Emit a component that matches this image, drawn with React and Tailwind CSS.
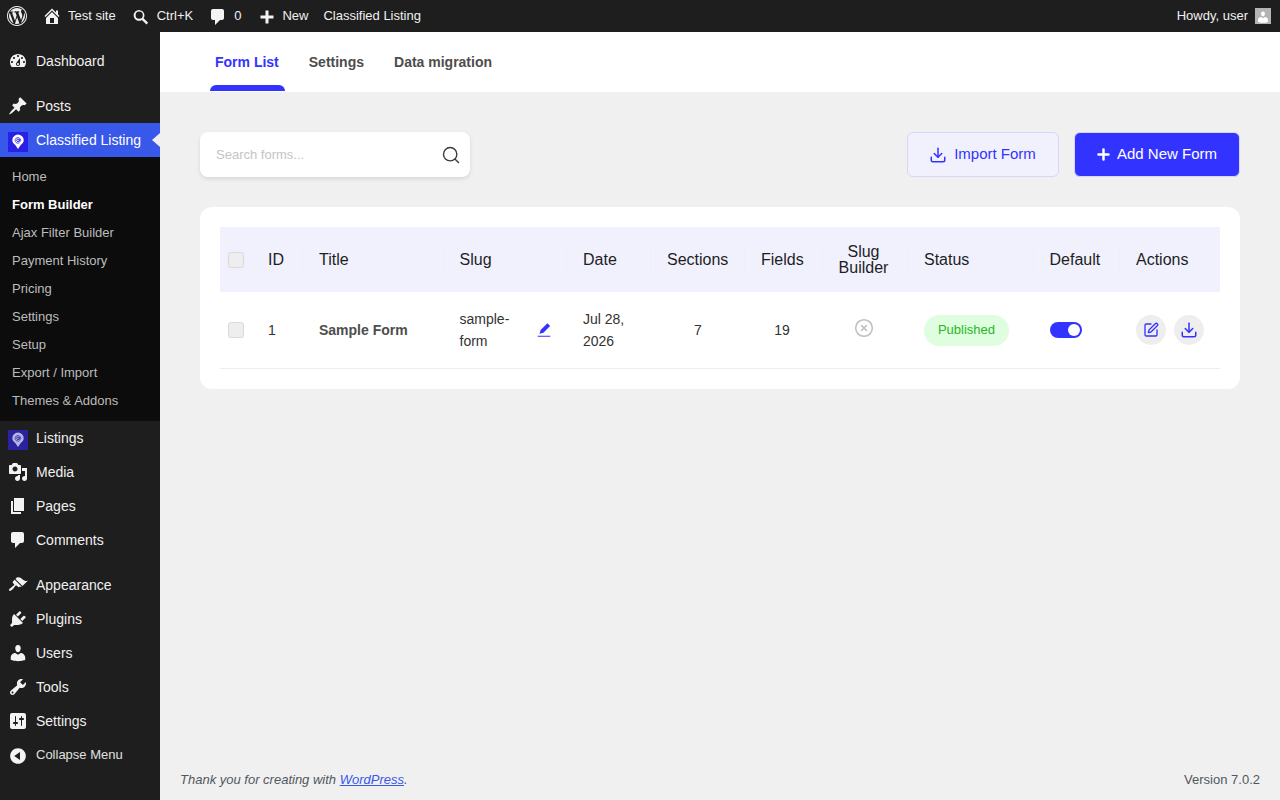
import React from "react";
import { Search, Download, Plus, SquarePen, CircleX } from "lucide-react";

// dashicons, 20x20 grid
const ICONS = {
  wordpress: "M20 10c0-5.52-4.48-10-10-10S0 4.48 0 10s4.48 10 10 10 10-4.48 10-10zM10 1.01c4.96 0 8.99 4.03 8.99 8.99s-4.03 8.99-8.99 8.99S1.01 14.96 1.01 10 5.04 1.01 10 1.01zM8.01 14.82L4.96 6.61c.49-.03 1.05-.08 1.05-.08.43-.05.38-1.01-.06-.99 0 0-1.29.1-2.13.1-.15 0-.33 0-.52-.01 1.44-2.17 3.9-3.6 6.7-3.6 2.09 0 3.99.79 5.41 2.09-.6-.08-1.45.35-1.45 1.42 0 .66.38 1.22.79 1.88.31.54.5 1.22.5 2.21 0 1.34-1.27 4.48-1.27 4.48l-2.71-7.5c.48-.03.75-.16.75-.16.43-.05.38-1.1-.05-1.08 0 0-1.3.11-2.14.11-.78 0-2.11-.11-2.11-.11-.43-.02-.48 1.06-.05 1.08l.84.08 1.12 3.04zm6.02 2.15L16.64 10s.67-1.69.39-3.81c.63 1.14.94 2.42.94 3.81 0 2.96-1.56 5.58-3.94 6.97zM2.68 6.77L6.5 17.25c-2.67-1.3-4.47-4.08-4.47-7.25 0-1.16.2-2.23.65-3.23zm7.45 4.53l2.29 6.25c-.75.27-1.57.42-2.42.42-.72 0-1.41-.11-2.06-.3z",
  home: "M16 8.5l1.53 1.53-1.06 1.06L10 4.62l-6.47 6.47-1.06-1.06L10 2.5l4 4v-2h2v4zm-6-2.46l6 5.99V18H4v-5.97zM12 17v-5H8v5h4z",
  search: "M12.9 11.5l5 5-1.8 1.8-5-5a6 6 0 1 1 1.8-1.8zM8 12a4 4 0 1 0 0-8 4 4 0 0 0 0 8z",
  comment: "M5 2h9c1.1 0 2 .9 2 2v7c0 1.1-.9 2-2 2h-2l-5 5v-5H5c-1.1 0-2-.9-2-2V4c0-1.1.9-2 2-2z",
  plus: "M8.5 3.5h3v5h5v3h-5v5h-3v-5h-5v-3h5z",
  dashboard: "M3.76 16h12.48c1.1-1.37 1.76-3.11 1.76-5 0-4.42-3.58-8-8-8s-8 3.58-8 8c0 1.89.66 3.63 1.76 5zM10 4c.55 0 1 .45 1 1s-.45 1-1 1-1-.45-1-1 .45-1 1-1zM6 6c.55 0 1 .45 1 1s-.45 1-1 1-1-.45-1-1 .45-1 1-1zm8 0c.55 0 1 .45 1 1s-.45 1-1 1-1-.45-1-1 .45-1 1-1zm-5.37 5.55L12 7v6c0 1.1-.9 2-2 2s-2-.9-2-2c0-.57.24-1.08.63-1.45zM4 10c.55 0 1 .45 1 1s-.45 1-1 1-1-.45-1-1 .45-1 1-1zm12 0c.55 0 1 .45 1 1s-.45 1-1 1-1-.45-1-1 .45-1 1-1zm-5 3c0-.55-.45-1-1-1s-1 .45-1 1 .45 1 1 1 1-.45 1-1z",
  posts: "M10.44 3.02l1.82-1.82 6.36 6.35-1.83 1.82c-1.05-.68-2.48-.57-3.41.36l-.75.75c-.92.93-1.04 2.35-.35 3.41l-1.83 1.82-2.41-2.41-2.8 2.79c-.42.42-3.38 2.71-3.8 2.29s1.86-3.39 2.28-3.81l2.79-2.79L4.1 9.36l1.83-1.82c1.05.69 2.48.57 3.4-.36l.75-.75c.93-.92 1.05-2.35.36-3.41z",
  media: "M13 11V4c0-.55-.45-1-1-1h-1.67L9 1H5L3.67 3H2c-.55 0-1 .45-1 1v7c0 .55.45 1 1 1h10c.55 0 1-.45 1-1zM7 4.5c1.38 0 2.5 1.12 2.5 2.5S8.38 9.5 7 9.5 4.5 8.38 4.5 7 5.62 4.5 7 4.5zM14 6h5v10.5c0 1.38-1.12 2.5-2.5 2.5S14 17.88 14 16.5s1.12-2.5 2.5-2.5c.17 0 .34.02.5.05V9h-3V6zm-4 8.05V13h2v3.5c0 1.38-1.12 2.5-2.5 2.5S7 17.88 7 16.5 8.12 14 9.5 14c.17 0 .34.02.5.05z",
  pages: "M6 15V2h10v13H6zm-1 1h8v2H3V5h2v11z",
  appearance: "M14.48 11.06L7.41 3.99l1.5-1.5c.5-.56 2.3-.47 3.51.32 1.21.8 1.43 1.28 2.91 2.1 1.18.64 2.45 1.26 4.45.85zm-.71.71L6.7 4.7 4.93 6.47c-.39.39-.39 1.02 0 1.41l1.06 1.06c.39.39.39 1.03 0 1.42-.6.6-1.43 1.11-2.21 1.69-.35.26-.7.53-1.01.84C1.43 13.23.4 14.79 1.2 15.6c.8.8 2.36-.22 3.71-1.57.31-.31.58-.66.85-1.02.57-.78 1.08-1.61 1.69-2.21.39-.39 1.02-.39 1.41 0l1.06 1.06c.39.39 1.02.39 1.41 0z",
  plugins: "M13.11 4.36L9.87 7.6 8 5.73l3.24-3.24c.35-.34 1.05-.2 1.56.32.52.51.66 1.21.31 1.55zm-8 1.77l.91-1.12 9.01 9.01-1.19.84c-.71.71-2.63 1.16-3.82 1.16H6.14L4.9 17.26c-.59.59-1.54.59-2.12 0-.59-.58-.59-1.53 0-2.12l1.24-1.24v-3.88c0-1.13.4-3.19 1.09-3.89zm7.26 3.97l3.24-3.24c.34-.35 1.04-.21 1.55.31.52.51.66 1.21.31 1.55l-3.24 3.25z",
  users: "M10 9.25c-2.27 0-2.73-3.44-2.73-3.44C7 4.02 7.82 2 9.97 2c2.16 0 2.98 2.02 2.71 3.81 0 0-.41 3.44-2.68 3.44zm0 2.57L12.72 10c2.39 0 4.52 2.33 4.52 4.53v2.49s-3.65 1.13-7.24 1.13c-3.65 0-7.24-1.13-7.24-1.13v-2.49c0-2.25 1.94-4.48 4.47-4.48z",
  tools: "M16.68 9.77c-1.34 1.34-3.3 1.67-4.95.99l-5.41 6.52c-.99.99-2.59.99-3.58 0s-.99-2.59 0-3.57l6.52-5.42c-.68-1.65-.35-3.61.99-4.95 1.28-1.28 3.12-1.62 4.72-1.06l-2.89 2.89 2.82 2.82 2.86-2.87c.53 1.58.18 3.39-1.08 4.65zM3.81 16.21c.4.39 1.04.39 1.43 0 .4-.4.4-1.04 0-1.43-.39-.4-1.03-.4-1.43 0-.39.39-.39 1.03 0 1.43z",
  settings: "M18 16V4c0-1.1-.9-2-2-2H4c-1.1 0-2 .9-2 2v12c0 1.1.9 2 2 2h12c1.1 0 2-.9 2-2zM8 11h1c.55 0 1 .45 1 1s-.45 1-1 1H8v1.5c0 .28-.22.5-.5.5s-.5-.22-.5-.5V13H6c-.55 0-1-.45-1-1s.45-1 1-1h1V5.5c0-.28.22-.5.5-.5s.5.22.5.5V11zm5-2h-1c-.55 0-1-.45-1-1s.45-1 1-1h1V5.5c0-.28.22-.5.5-.5s.5.22.5.5V7h1c.55 0 1 .45 1 1s-.45 1-1 1h-1v5.5c0 .28-.22.5-.5.5s-.5-.22-.5-.5V9z",
  collapse: "M10 2.16c4.33 0 7.84 3.51 7.84 7.84s-3.51 7.84-7.84 7.84S2.16 14.33 2.16 10 5.71 2.16 10 2.16zm2 11.72V6.12L6.18 9.97z",
  pen: "M13.8 2.6l3 2.9-7.4 7.6-4.4 1.2 1.2-4.4zM3 16.5h14v1H3z",
};

const Dash = ({ name, className }) => (
  <svg viewBox="0 0 20 20" fill="currentColor" fillRule="evenodd" className={className}>
    <path d={ICONS[name]} />
  </svg>
);

// location pin with an @, the plugin's menu logo
const PinLogo = ({ tile, pin, ink }) => (
  <span className={`mt-1 flex h-5 w-5 shrink-0 items-center justify-center ${tile}`}>
    <svg viewBox="0 0 20 20" className="h-5 w-5">
      <path d="M10 2.6a5.7 5.7 0 0 1 5.7 5.7c0 2.3-1.4 3.7-3 4.7L10 17l-2.7-4c-1.6-1-3-2.4-3-4.7A5.7 5.7 0 0 1 10 2.6z" fill={pin} />
      <circle cx="10" cy="8.3" r="1.3" fill="none" stroke={ink} strokeWidth="0.9" />
      <path d="M11.3 7v1.8c0 1 1.4 1 1.4-.5a2.8 2.8 0 1 0-1.1 2.3" fill="none" stroke={ink} strokeWidth="0.8" />
    </svg>
  </span>
);

const SUBMENU = ["Home", "Form Builder", "Ajax Filter Builder", "Payment History", "Pricing", "Settings", "Setup", "Export / Import", "Themes & Addons"];

const MenuItem = ({ icon, label }) => (
  <a className="flex h-[34px] items-center text-sm text-[#f0f0f0]">
    <span className="flex w-9 justify-center">
      <Dash name={icon} className="h-5 w-5 text-[#f3f3f3]" />
    </span>
    <span>{label}</span>
  </a>
);

function AdminBar() {
  return (
    <header className="flex h-8 shrink-0 items-center bg-[#1e1e1e] text-[13px] text-[#f0f0f0]">
      <Dash name="wordpress" className="ml-[7px] h-5 w-5 text-[#eeeeee]" />
      <Dash name="home" className="ml-[15px] h-5 w-5 text-[#f3f3f3]" />
      <span className="ml-[6px]">Test site</span>
      <Dash name="search" className="ml-4 mt-[2px] h-[18px] w-[18px] text-[#f3f3f3]" />
      <span className="ml-[7px]">Ctrl+K</span>
      <Dash name="comment" className="ml-[15px] mt-[2px] h-5 w-5 text-[#f3f3f3]" />
      <span className="ml-[6px]">0</span>
      <Dash name="plus" className="ml-[15.5px] mt-px h-5 w-5 text-[#f3f3f3]" />
      <span className="ml-[5.5px]">New</span>
      <span className="ml-[15px]">Classified Listing</span>
      <span className="ml-auto">Howdy, user</span>
      <span className="ml-[7px] mr-[9px] flex h-4 w-4 items-end justify-center overflow-hidden bg-[#b4b4b4]">
        <Dash name="users" className="h-[14px] w-[14px] text-white" />
      </span>
    </header>
  );
}

function Sidebar() {
  return (
    <aside className="flex w-40 shrink-0 flex-col bg-[#1e1e1e] pt-3">
      <MenuItem icon="dashboard" label="Dashboard" />
      <div className="h-[11px]" />
      <MenuItem icon="posts" label="Posts" />

      <a className="relative flex h-[34px] items-center bg-[#3858e9] text-sm text-white">
        <span className="flex w-9 justify-center">
          <PinLogo tile="bg-[#2a1fe6]" pin="#ffffff" ink="#2a1fe6" />
        </span>
        <span>Classified Listing</span>
        <span className="absolute right-0 top-[10px] h-0 w-0 border-y-[7px] border-r-[8px] border-y-transparent border-r-[#f0f0f0]" />
      </a>
      <ul className="bg-[#0c0c0c] py-[6px] text-[13px] text-[#bcbcbc]">
        {SUBMENU.map((item) => (
          <li key={item} className={`flex h-7 items-center pl-3 ${item === "Form Builder" ? "font-bold text-white" : ""}`}>
            {item}
          </li>
        ))}
      </ul>

      <a className="flex h-[34px] items-center text-sm text-[#f0f0f0]">
        <span className="flex w-9 justify-center">
          <PinLogo tile="bg-[#2a239f]" pin="#b9b6e4" ink="#2a239f" />
        </span>
        <span>Listings</span>
      </a>
      <MenuItem icon="media" label="Media" />
      <MenuItem icon="pages" label="Pages" />
      <MenuItem icon="comment" label="Comments" />
      <div className="h-[11px]" />
      <MenuItem icon="appearance" label="Appearance" />
      <MenuItem icon="plugins" label="Plugins" />
      <MenuItem icon="users" label="Users" />
      <MenuItem icon="tools" label="Tools" />
      <MenuItem icon="settings" label="Settings" />
      <a className="flex h-[34px] items-center text-[13px] text-[#e0e0e0]">
        <span className="flex w-9 justify-center pt-[2px]">
          <Dash name="collapse" className="h-5 w-5 text-[#f3f3f3]" />
        </span>
        <span className="pb-px">Collapse Menu</span>
      </a>
    </aside>
  );
}

function Tabs() {
  return (
    <nav className="flex h-[60px] shrink-0 bg-white pl-10 text-sm font-bold text-[#4d4d4d]">
      <a className="relative flex h-full items-center px-[15px] text-[#3333ff]">
        Form List
        <span className="absolute bottom-[1px] left-[10px] right-[9px] h-[6px] rounded-t-lg bg-[#3333ff]" />
      </a>
      <a className="flex h-full items-center px-[15px]">Settings</a>
      <a className="flex h-full items-center px-[15px]">Data migration</a>
    </nav>
  );
}

function Toolbar() {
  return (
    <div className="flex items-center justify-between">
      <div className="flex h-[45px] w-[270px] items-center justify-between rounded-lg bg-white pl-4 pr-[9px] shadow-[0_2px_4px_rgba(0,0,0,0.1)]">
        <span className="text-[13px] text-[#c4c4c4]">Search forms...</span>
        <Search className="h-5 w-5 text-[#3c3c3c]" strokeWidth={1.7} />
      </div>
      <div className="flex gap-[15px]">
        <button className="flex h-[45px] w-[152px] items-center justify-center gap-[7px] rounded-md border border-[#d6d6f7] bg-[#f1f1fe] pr-px text-[15px] text-[#3333ff]">
          <Download className="h-[18px] w-[18px]" strokeWidth={2} />
          Import Form
        </button>
        <button className="flex h-[45px] w-[166px] items-center justify-center gap-[5px] rounded-md border border-[#d6d6f7] bg-[#3333ff] pr-[2px] text-[15px] text-white">
          <Plus className="h-[17px] w-[17px]" strokeWidth={3.5} />
          Add New Form
        </button>
      </div>
    </div>
  );
}

const COLUMNS = [
  { label: "ID", w: "w-[51px]" },
  { label: "Title", w: "w-[140.5px]" },
  { label: "Slug", w: "w-[123.5px]" },
  { label: "Date", w: "w-[84px]" },
  { label: "Sections", w: "w-[94px]" },
  { label: "Fields", w: "w-[78px]" },
  { label: "Slug Builder", w: "w-[85px]", center: true },
  { label: "Status", w: "w-[125.5px]" },
  { label: "Default", w: "w-[86.5px]" },
  { label: "Actions", w: "w-[100px]", last: true },
];

function FormTable() {
  return (
    <div className="mt-[30px] rounded-xl bg-white p-5">
      <table className="w-full table-fixed border-collapse text-left">
        <thead>
          <tr className="h-[65px] bg-[#f1f1fe] text-base leading-4 text-[#1e1e1e]">
            <th className="w-8 pl-2 font-normal">
              <span className="block h-4 w-4 rounded-[3px] border border-[#d9d9d9] bg-[#eeeeee]" />
            </th>
            {COLUMNS.map((col) => (
              <th
                key={col.label}
                className={`${col.w} relative font-normal ${col.center ? "pl-[14px] pr-[18px] text-center" : "px-4"} ${
                  col.last ? "" : "after:absolute after:right-0 after:top-[19px] after:h-[27px] after:w-px after:bg-[#eeeefa]"
                }`}
              >
                {col.label}
              </th>
            ))}
          </tr>
        </thead>
        <tbody>
          <tr className="h-[76px] border-b border-[#eeeeee] text-sm leading-[22px] text-[#333333]">
            <td className="pl-2 pt-px">
              <span className="block h-4 w-4 rounded-[3px] border border-[#d9d9d9] bg-[#eeeeee]" />
            </td>
            <td className="px-4">1</td>
            <td className="px-4 font-bold text-[#4d4d4d]">Sample Form</td>
            <td className="px-4">
              <div className="flex items-center justify-between">
                <span className="w-[60px]">sample-form</span>
                <Dash name="pen" className="-mr-[2px] h-[18px] w-[18px] text-[#3333ff]" />
              </div>
            </td>
            <td className="px-4">Jul 28, 2026</td>
            <td className="px-4 text-center">7</td>
            <td className="pl-4 pr-5 text-center">19</td>
            <td className="pb-1 pl-[14px] pr-[18px]">
              <CircleX className="mx-auto h-5 w-5 text-[#bdbdbd]" strokeWidth={1.8} />
            </td>
            <td className="px-4 pt-px">
              <span className="inline-flex h-[31px] w-[85px] items-center justify-center rounded-full bg-[#dffddf] text-[13px] text-[#1fb81f]">
                Published
              </span>
            </td>
            <td className="px-4 pt-px">
              <span className="flex h-4 w-8 items-center justify-end rounded-full bg-[#3333ff] pr-[2px]">
                <span className="h-3 w-3 rounded-full bg-white" />
              </span>
            </td>
            <td className="px-4">
              <div className="flex gap-2">
                <span className="flex h-[30px] w-[30px] items-center justify-center rounded-full bg-[#eeeeee]">
                  <SquarePen className="h-4 w-4 text-[#3333ff]" strokeWidth={2} />
                </span>
                <span className="flex h-[30px] w-[30px] items-center justify-center rounded-full bg-[#eeeeee]">
                  <Download className="h-[18px] w-[18px] text-[#3333ff]" strokeWidth={2} />
                </span>
              </div>
            </td>
          </tr>
        </tbody>
      </table>
    </div>
  );
}

export default function App() {
  return (
    <div className="flex h-screen flex-col overflow-hidden bg-[#f0f0f0] font-['Liberation_Sans',sans-serif]">
      <AdminBar />
      <div className="flex min-h-0 flex-1">
        <Sidebar />
        <main className="flex min-w-0 flex-1 flex-col">
          <Tabs />
          <section className="flex-1 px-10 pt-10">
            <Toolbar />
            <FormTable />
          </section>
          <footer className="flex h-[42px] shrink-0 items-center justify-between px-5 pt-[2px] text-[13px] text-[#50575e]">
            <p className="italic">
              Thank you for creating with <a className="text-[#3858e9] underline">WordPress</a>.
            </p>
            <p>Version 7.0.2</p>
          </footer>
        </main>
      </div>
    </div>
  );
}
